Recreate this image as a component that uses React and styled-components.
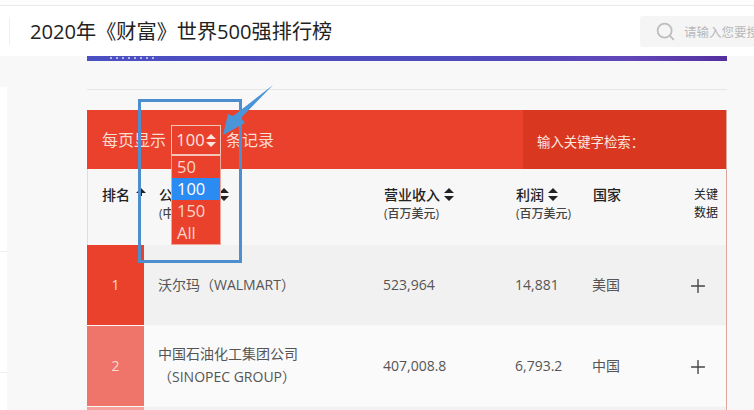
import React from 'react';
import styled, { createGlobalStyle } from 'styled-components';
import { Plus, Search } from 'lucide-react';

const rows = [
  { rank: 1, name: ['沃尔玛（WALMART）'], revenue: '523,964', profit: '14,881', country: '美国' },
  { rank: 2, name: ['中国石油化工集团公司', '（SINOPEC GROUP）'], revenue: '407,008.8', profit: '6,793.2', country: '中国' },
  { rank: 3, name: [], revenue: '', profit: '', country: '' },
];
const rankColors = { 1: '#ea412c', 2: '#ef756a', 3: '#f4a29b' };
const options = ['50', '100', '150', 'All'];

function SortIcon({ up }) {
  return (
    <SortSvg viewBox="0 0 10 13" width="10" height="13" $up={up}>
      <path d={up ? 'M5 0 L10 5 H0 Z M4 5 H6 V8 H4 Z' : 'M5 0 L10 5 H0 Z M0 8 H10 L5 13 Z'} fill="currentColor" />
    </SortSvg>
  );
}

export default function App() {
  return (
    <Page>
      <GlobalStyle />
      <TopStrip />
      <Header>
        <Title>2020年《财富》世界500强排行榜</Title>
        <SearchBox>
          <Search size={21} strokeWidth={2} color="#bdbdbd" />
          <SearchInput placeholder="请输入您要搜索的内容" />
        </SearchBox>
      </Header>
      <Body>
        <Sidebar>
          <SideItem />
          <SideItem />
          <SideItem />
        </Sidebar>
        <Content>
          <Banner><BannerDots /></Banner>
          <Rule />
          <Table>
            <Toolbar>
              <PageSize>
                <span>每页显示</span>
                <SelectBox>100<SortIcon /></SelectBox>
                <span>条记录</span>
              </PageSize>
              <FilterLabel>输入关键字检索：</FilterLabel>
            </Toolbar>
            <HeadRow>
              <RankHead>排名 <SortIcon up /></RankHead>
              <NameHead>公司名称 <SortIcon /><SubHead>(中文名称)</SubHead></NameHead>
              <HeadCell>营业收入 <SortIcon /><SubHead>(百万美元)</SubHead></HeadCell>
              <HeadCell>利润 <SortIcon /><SubHead>(百万美元)</SubHead></HeadCell>
              <HeadCell>国家</HeadCell>
              <KeyHead>关键<br />数据</KeyHead>
            </HeadRow>
            {rows.map(r => (
              <Row key={r.rank} $alt={r.rank % 2 === 1}>
                <RankCell $bg={rankColors[r.rank]}>{r.revenue && r.rank}</RankCell>
                <NameCell>
                  {r.name.map((line, i) => <NameLine key={i}>{line}</NameLine>)}
                </NameCell>
                <Cell>{r.revenue}</Cell>
                <Cell>{r.profit}</Cell>
                <Cell>{r.country}</Cell>
                <PlusCell>{r.revenue && <Plus size={22} strokeWidth={1.5} />}</PlusCell>
              </Row>
            ))}
          </Table>
        </Content>
      </Body>
      <Dropdown>
        {options.map(o => <Option key={o} $active={o === '100'}>{o}</Option>)}
      </Dropdown>
      <Highlight />
      <Arrow viewBox="0 0 60 60" width="60" height="60">
        <path d="M56 1 L24 34 L28 39 L6 51 L11 30 L16 32 Z" fill="#4a94d8" />
      </Arrow>
    </Page>
  );
}

const GlobalStyle = createGlobalStyle`
  html, body {
    margin: 0;
    padding: 0;
    background: #f8f8f8;
    overflow: hidden;
  }
  * { box-sizing: border-box; }
`;
const Page = styled.div`
  position: relative;
  width: 754px;
  height: 410px;
  overflow: hidden;
  font-family: "Open Sans", "Noto Sans CJK SC", sans-serif;
  color: #555;
`;
const TopStrip = styled.div`
  height: 6px;
  background: #fdfdfd;
  border-bottom: 1px solid #e9e9e9;
`;
const Header = styled.header`
  height: 50px;
  background: #fff;
  display: flex;
  align-items: center;
  justify-content: space-between;
  padding-left: 9px;
`;
const Title = styled.h1`
  margin: 0;
  padding-left: 20px;
  height: 28px;
  line-height: 28px;
  border-left: 1px solid #eeeeee;
  font-size: 20.15px;
  font-weight: 400;
  color: #222;
  white-space: nowrap;
`;
const SearchBox = styled.div`
  width: 114px;
  height: 31px;
  background: #f5f5f5;
  border-radius: 3px 0 0 3px;
  display: flex;
  align-items: center;
  gap: 8px;
  padding-left: 15px;
  flex-shrink: 0;
`;
const SearchInput = styled.input`
  flex: 1;
  min-width: 0;
  border: 0;
  padding: 0;
  background: transparent;
  font: 12.5px "Noto Sans CJK SC", sans-serif;
  &::placeholder { color: #b9b9b9; opacity: 1; }
`;
const Body = styled.div`
  display: flex;
`;
const Sidebar = styled.aside`
  width: 7px;
  margin-top: 31px;
  margin-right: 80px;
  background: #fff;
  height: 400px;
`;
const SideItem = styled.div`
  height: 121px;
  border-bottom: 1px solid #eeeeee;
  &:first-child { height: 165px; }
`;
const Content = styled.main`
  width: 640px;
`;
const Banner = styled.div`
  height: 5px;
  padding-left: 23px;
  background: linear-gradient(90deg, #4a4fc2, #4f4bbd 60%, #6146b8 85%, #54309f);
  overflow: hidden;
`;
const BannerDots = styled.div`
  width: 46px;
  height: 2px;
  margin-top: 1px;
  background: repeating-linear-gradient(90deg, #b9b6e6 0 2px, transparent 2px 6px);
`;
const Rule = styled.div`
  margin-top: 28px;
  margin-bottom: 20px;
  border-top: 1px solid #e6e6e6;
`;
const Table = styled.section`
  border-right: 1px solid #dca89b;
`;
const Toolbar = styled.div`
  height: 59px;
  display: flex;
  background: linear-gradient(90deg, #ea412c 436px, #d9371f 436px);
  color: #f9dcd3;
`;
const PageSize = styled.div`
  width: 436px;
  padding: 15px 0 0 15px;
  display: flex;
  align-items: flex-start;
  gap: 5px;
  font-size: 16px;
  line-height: 30px;
`;
const SelectBox = styled.div`
  width: 50px;
  height: 30px;
  border: 1px solid #f3c4b8;
  display: flex;
  align-items: center;
  justify-content: center;
  gap: 1px;
  font-size: 16.5px;
  color: #fbe6df;
`;
const FilterLabel = styled.div`
  padding: 22px 0 0 14px;
  font-size: 13.4px;
  line-height: 20px;
  color: #fbe6df;
`;
const SortSvg = styled.svg`
  display: inline-block;
  vertical-align: -1px;
  color: currentColor;
  margin-left: ${p => (p.$up ? '2px' : '0')};
`;
const columns = '57px 239px 132px 77px 101px 33px';
const HeadRow = styled.div`
  height: 76px;
  display: grid;
  grid-template-columns: ${columns};
  background: #f7f7f7;
  border-left: 1px solid #f0d8d2;
`;
const HeadCell = styled.div`
  padding-top: 16px;
  font-size: 14px;
  line-height: 20px;
  font-weight: 500;
  color: #222;
  white-space: nowrap;
`;
const RankHead = styled(HeadCell)`
  padding-left: 14px;
`;
const NameHead = styled(HeadCell)`
  padding-left: 14px;
`;
const KeyHead = styled(HeadCell)`
  padding-top: 17px;
  font-size: 12px;
  line-height: 18px;
  font-weight: 400;
`;
const SubHead = styled.div`
  font-size: 12px;
  line-height: 18px;
  color: #444;
`;
const Row = styled.div`
  height: 80px;
  margin-bottom: 1px;
  display: grid;
  grid-template-columns: ${columns};
  align-items: center;
  background: ${p => (p.$alt ? '#f1f1f1' : '#fafafa')};
  font-size: 14px;
  color: #555;
`;
const Cell = styled.div`
  white-space: nowrap;
  padding-bottom: 2px;
`;
const RankCell = styled.div`
  height: 100%;
  display: flex;
  align-items: center;
  justify-content: center;
  background: ${p => p.$bg};
  color: #fbdcd3;
  padding-bottom: 2px;
`;
const NameCell = styled.div`
  padding: 0 0 2px 14px;
  line-height: 23px;
`;
const NameLine = styled.div`
  white-space: nowrap;
`;
const PlusCell = styled.div`
  color: #444;
  display: flex;
  margin-left: -6px;
  padding-top: 2px;
`;
const Dropdown = styled.ul`
  position: absolute;
  left: 171px;
  top: 155px;
  width: 50px;
  margin: 0;
  padding: 0;
  list-style: none;
  background: #ea412c;
  border: 1px solid #f0a597;
  border-top-color: #f3c4b8;
`;
const Option = styled.li`
  height: 22px;
  padding-left: 5px;
  font-size: 16.5px;
  line-height: 22px;
  color: ${p => (p.$active ? '#fff' : '#f9d6cc')};
  background: ${p => (p.$active ? '#2a8bf2' : 'transparent')};
`;
const Highlight = styled.div`
  position: absolute;
  left: 138px;
  top: 99px;
  width: 104px;
  height: 164px;
  border: 3px solid #4d8ecf;
  pointer-events: none;
`;
const Arrow = styled.svg`
  position: absolute;
  left: 217px;
  top: 84px;
`;
